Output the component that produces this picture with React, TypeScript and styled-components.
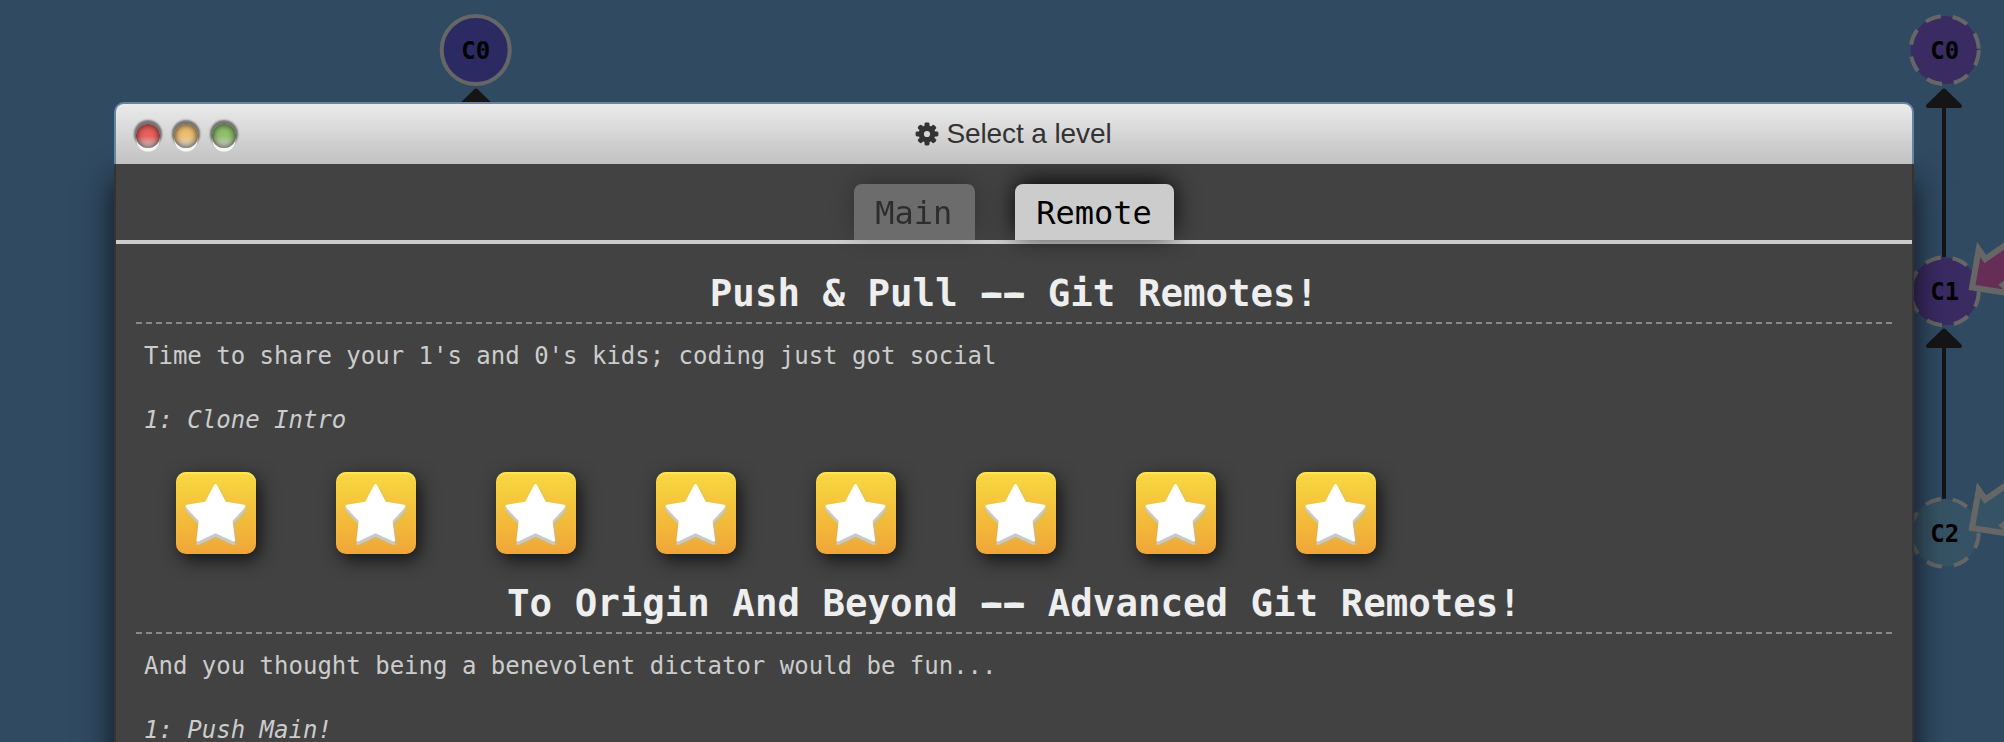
import React from "react";
import styled, { createGlobalStyle } from "styled-components";

const mono = `Menlo, "DejaVu Sans Mono", monospace`;

const GlobalStyle = createGlobalStyle`
  html, body { margin: 0; height: 100%; }
  body { overflow: hidden; background: #304a62; }
  *, *::before, *::after { box-sizing: border-box; }
`;

const Page = styled.div`
  position: relative;
  width: 2004px;
  height: 742px;
  overflow: hidden;
  background: #304a62;
  padding: 102px 90px 0 114px;
  font-family: ${mono};
`;

const Graph = styled.svg`
  position: absolute;
  inset: 0;
  text {
    font: bold 24px ${mono};
    text-anchor: middle;
  }
`;

const Window = styled.section`
  position: relative;
  display: flex;
  flex-direction: column;
  height: 760px;
`;

const TitleBar = styled.header`
  position: relative;
  z-index: 1;
  display: grid;
  grid-template-columns: 1fr auto 1fr;
  height: 62px;
  padding: 0 18px;
  border: 2px solid #6685a3;
  border-bottom: 0;
  border-radius: 10px 10px 0 0;
  background: linear-gradient(#ebebeb, #c1c1c1);
`;

const Lights = styled.div`
  display: flex;
  gap: 14px;
  padding-top: 20px;
  padding-left: 2px;
`;

const Light = styled.span<{ $color: string }>`
  width: 24px;
  height: 24px;
  border-radius: 50%;
  background: linear-gradient(${(p) => p.$color} 50%, #ddd 100%);
  box-shadow:
    inset 0 0 7px rgba(0, 0, 0, 0.8),
    0 4px 0 -0.5px #f6f6f6,
    0 -2px 2px 2px rgba(0, 0, 0, 0.48);
`;

const Title = styled.h1`
  display: flex;
  align-items: center;
  gap: 8px;
  margin: 0;
  height: 60px;
  color: #333;
  font: 400 28px/62px "Helvetica Neue", Helvetica, "Liberation Sans", sans-serif;
  letter-spacing: -0.1px;
`;

const Content = styled.div`
  flex: 1;
  border: 2px solid #333;
  border-top: 0;
  background: #424242;
  box-shadow: 0 16px 30px rgba(0, 0, 0, 0.75);
`;

const Tabs = styled.nav`
  display: flex;
  justify-content: center;
  gap: 40px;
  height: 80px;
  padding-top: 20px;
  border-bottom: 4px solid #ccc;
`;

const Tab = styled.button<{ $active?: boolean }>`
  height: 56px;
  padding: 0 22.5px 0 21.5px;
  border: 0;
  border-radius: 8px 8px 0 0;
  background: #ccc;
  color: #000;
  font: 32px/58px ${mono};
  opacity: ${(p) => (p.$active ? 1 : 0.3)};
  box-shadow: 0 -4px 26px -2px #000;
`;

const Levels = styled.main`
  padding: 20px;
`;

const Sequence = styled.section`
  height: 310px;
`;

const Heading = styled.h3`
  height: 60px;
  margin: 0;
  border-bottom: 2px dashed #888;
  color: #eee;
  text-align: center;
  font: bold 37.44px/58px ${mono};
`;

const Dashes = styled.span`
  text-shadow: -4px 0 0 #eee, 4px 0 0 #eee;
`;

const Line = styled.p<{ $italic?: boolean }>`
  height: 64px;
  margin: 0;
  padding-left: 8px;
  color: #ccc;
  font: ${(p) => (p.$italic ? "italic" : "normal")} 24px/64px ${mono};
`;

const Icons = styled.div`
  display: flex;
  gap: 80px;
  padding: 20px 0 0 40px;
`;

const LevelIcon = styled.button`
  width: 80px;
  height: 82px;
  padding: 0;
  border: 0;
  border-radius: 10px;
  background: linear-gradient(#f8d940, #f0a637);
  box-shadow:
    inset 0 2px 1px rgba(255, 240, 100, 0.6),
    4px 6px 18px rgba(0, 0, 0, 0.7);
  svg { display: block; overflow: visible; }
  .side { filter: drop-shadow(2px 0 2px rgba(190, 190, 150, 0.6)); }
`;

const starPoints = "39.5,13.5 48.7,31 68,34.3 55,48.5 57.5,68 39.5,59.7 22,68 24.3,48.5 11,34.3 30.3,31";

const Star = () => (
  <svg width="80" height="82">
    <g strokeLinejoin="round" strokeWidth="3">
      <polygon className="side" points={starPoints} transform="translate(0 3.5)" fill="#c9c9c9" stroke="#c9c9c9" />
      <polygon points={starPoints} fill="#fff" stroke="#fff" />
    </g>
  </svg>
);

const Gear = () => (
  <svg width="22" height="22" viewBox="0 0 22 22" overflow="visible">
    <g fill="#333">
      {[0, 45, 90, 135].map((a) => (
        <rect key={a} x="8.5" y="-0.4" width="5" height="22.8" rx="1.4" transform={`rotate(${a} 11 11)`} />
      ))}
      <circle cx="11" cy="11" r="8.4" />
    </g>
    <circle cx="11" cy="11" r="3.1" fill="#d8d8d8" />
  </svg>
);

type CommitProps = { x: number; y: number; label: string; fill: string; dashed?: boolean };

const Commit = ({ x, y, label, fill, dashed }: CommitProps) => (
  <g>
    <circle cx={x} cy={y} r="34" fill={fill} stroke="#666" strokeWidth="4" strokeDasharray={dashed ? "16 12" : undefined} />
    <text x={x} y={y + 9}>{label}</text>
  </g>
);

const Parent = ({ x, y, length }: { x: number; y: number; length: number }) => (
  <g fill="#151515" stroke="#151515" strokeLinejoin="round" strokeWidth="4">
    <path d={`M${x} ${y + 18}V${y + length}`} />
    <path d={`M${x} ${y + 2.5}L${x + 16} ${y + 18}H${x - 16}Z`} />
  </g>
);

const Branch = ({ y, fill }: { y: number; fill: string }) => (
  <path
    d={`M2030 ${y - 63}L1985.3 ${y - 32}L1978.7 ${y - 41.5}L1972 ${y - 3.5}L2013 ${y + 3}L2003 ${y - 6}L2030 ${y - 26}Z`}
    fill={fill}
    stroke="#666"
    strokeWidth="6"
  />
);

const sequences = [
  { title: "Push & Pull -- Git Remotes!", about: "Time to share your 1's and 0's kids; coding just got social", level: "1: Clone Intro", count: 8 },
  { title: "To Origin And Beyond -- Advanced Git Remotes!", about: "And you thought being a benevolent dictator would be fun...", level: "1: Push Main!", count: 8 },
];

const SequenceTitle = ({ text }: { text: string }) => {
  const [before, after] = text.split("--");
  return (
    <Heading>
      {before}<Dashes>--</Dashes>{after}
    </Heading>
  );
};

export default function App() {
  return (
    <Page>
      <GlobalStyle />
      <Graph width="2004" height="742">
        <Parent x={476} y={88} length={169} />
        <Parent x={1944} y={88} length={169} />
        <Parent x={1944} y={328} length={171} />
        <Commit x={475.7} y={50} label="C0" fill="#2b2a63" />
        <Commit x={1944.7} y={50} label="C0" fill="#3a2b63" dashed />
        <Commit x={1944.7} y={291.3} label="C1" fill="#3a2b63" dashed />
        <Commit x={1944.7} y={532.7} label="C2" fill="#365365" dashed />
        <Branch y={291} fill="#662e57" />
        <Branch y={531.5} fill="#365365" />
      </Graph>
      <Window>
        <TitleBar>
          <Lights>
            <Light $color="#e9605c" />
            <Light $color="#eebf72" />
            <Light $color="#8fc06c" />
          </Lights>
          <Title><Gear />Select a level</Title>
        </TitleBar>
        <Content>
          <Tabs>
            <Tab>Main</Tab>
            <Tab $active>Remote</Tab>
          </Tabs>
          <Levels>
            {sequences.map((s) => (
              <Sequence key={s.title}>
                <SequenceTitle text={s.title} />
                <Line>{s.about}</Line>
                <Line $italic>{s.level}</Line>
                <Icons>
                  {Array.from({ length: s.count }, (_, i) => (
                    <LevelIcon key={i}><Star /></LevelIcon>
                  ))}
                </Icons>
              </Sequence>
            ))}
          </Levels>
        </Content>
      </Window>
    </Page>
  );
}
